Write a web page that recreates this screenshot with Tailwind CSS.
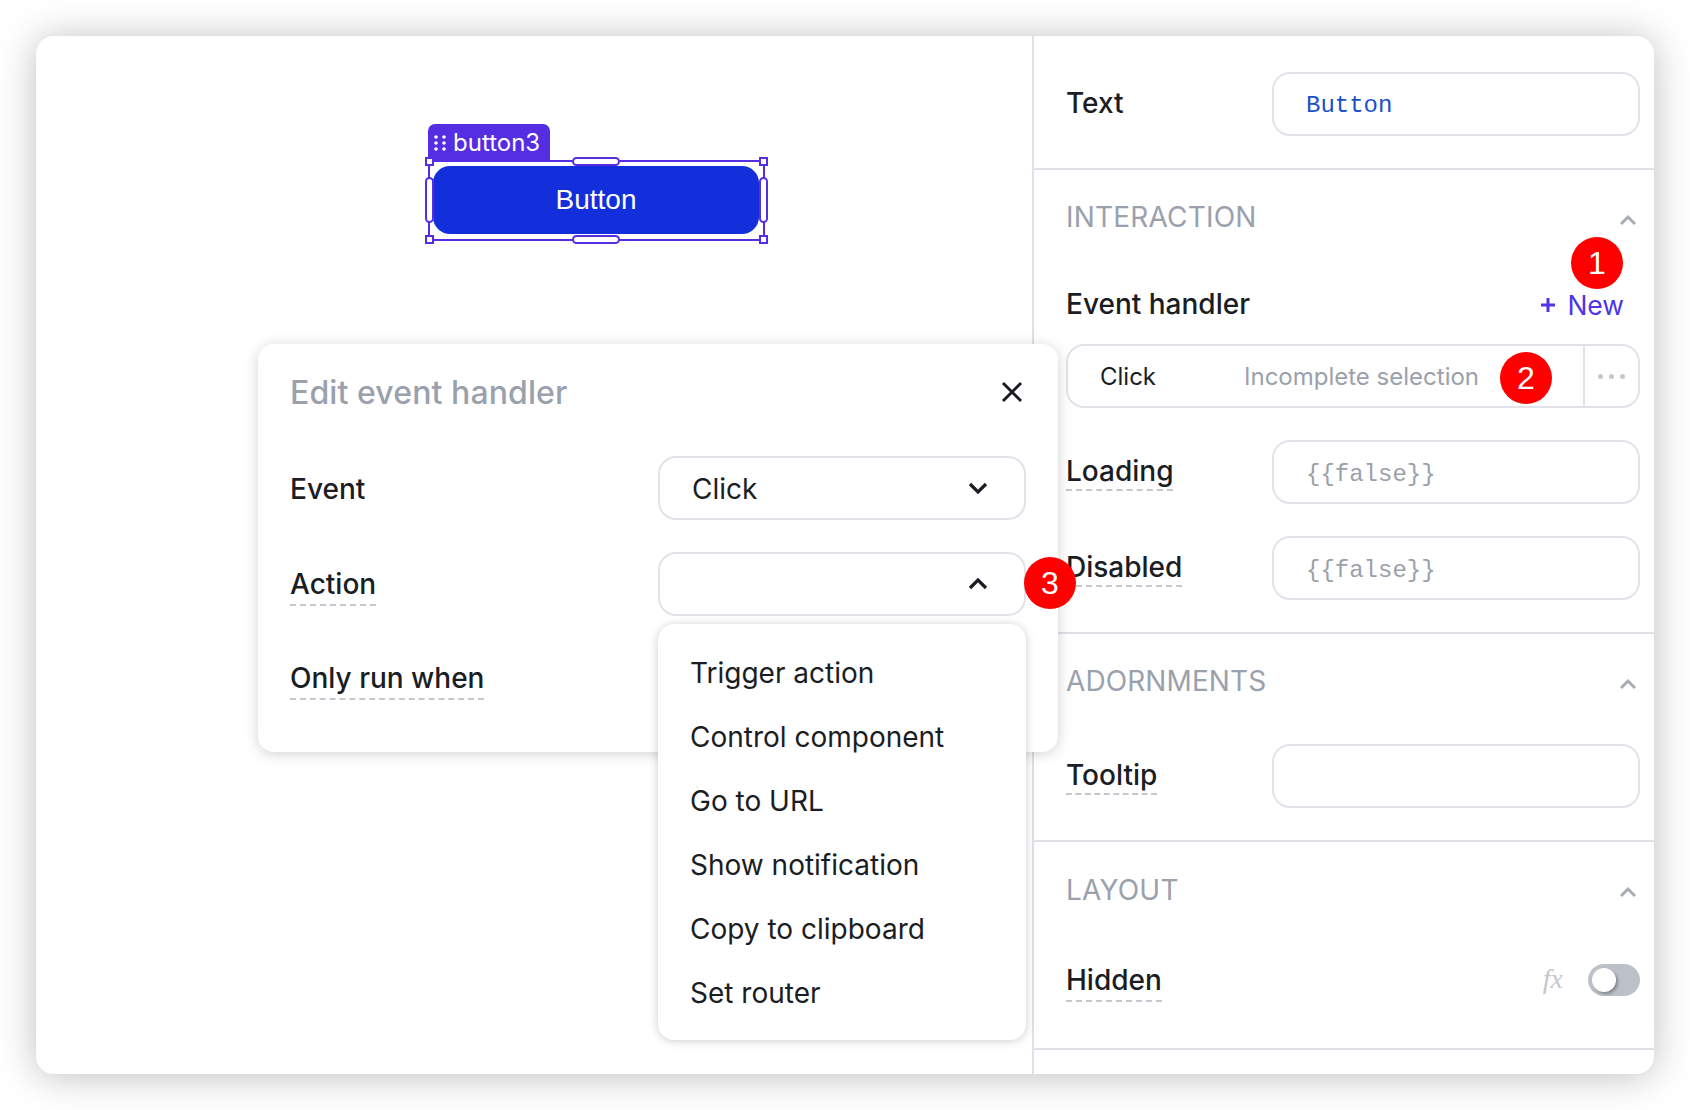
<!DOCTYPE html>
<html lang="en">
<head>
    <meta charset="UTF-8" />
    <title>Edit event handler</title>
    <script src="https://cdn.jsdelivr.net/npm/@tailwindcss/browser@4"></script>
</head>
<body class="bg-white w-[1690px] h-[1110px] overflow-hidden pt-[36px] pl-[36px] font-['Inter',sans-serif] text-[#1a1d24]">
    <div class="relative flex w-[1618px] h-[1038px] bg-white rounded-[18px] shadow-[0_2px_38px_rgba(0,0,0,0.26)]">

        <!-- canvas -->
        <div class="relative w-[996px] shrink-0">
            <!-- selected button -->
            <div class="absolute left-[392px] top-[88px] w-[122px] h-[37px] bg-[#552de3] rounded-t-[7px] flex items-center pl-[6px] gap-[7px] text-white text-[24px] leading-[32px]">
                <svg width="12" height="18" viewBox="0 0 12 18" fill="#fff"><circle cx="2" cy="3" r="1.8"/><circle cx="10" cy="3" r="1.8"/><circle cx="2" cy="9" r="1.8"/><circle cx="10" cy="9" r="1.8"/><circle cx="2" cy="15" r="1.8"/><circle cx="10" cy="15" r="1.8"/></svg>
                <span>button3</span>
            </div>
            <div class="absolute left-[392px] top-[124px] w-[337px] h-[81px] border-2 border-[#552de3]">
                <button class="absolute left-[3px] top-[4px] w-[326px] h-[68px] bg-[#132fdc] rounded-[17px] text-white text-[28px] font-['Liberation_Sans',sans-serif]">Button</button>
                <span class="absolute left-[-5px] top-[-5px] w-[9px] h-[9px] bg-white border-2 border-[#552de3]"></span>
                <span class="absolute right-[-5px] top-[-5px] w-[9px] h-[9px] bg-white border-2 border-[#552de3]"></span>
                <span class="absolute left-[-5px] bottom-[-5px] w-[9px] h-[9px] bg-white border-2 border-[#552de3]"></span>
                <span class="absolute right-[-5px] bottom-[-5px] w-[9px] h-[9px] bg-white border-2 border-[#552de3]"></span>
                <span class="absolute left-[142px] top-[-5px] w-[48px] h-[9px] bg-white border-2 border-[#552de3] rounded-full"></span>
                <span class="absolute left-[142px] bottom-[-5px] w-[48px] h-[9px] bg-white border-2 border-[#552de3] rounded-full"></span>
                <span class="absolute left-[-5px] top-[15px] w-[9px] h-[46px] bg-white border-2 border-[#552de3] rounded-full"></span>
                <span class="absolute right-[-5px] top-[15px] w-[9px] h-[46px] bg-white border-2 border-[#552de3] rounded-full"></span>
            </div>
        </div>

        <!-- right panel -->
        <div class="flex-1 border-l-2 border-[#dfe1e8] text-[28px] leading-[32px] font-medium">
            <div class="h-[134px] pt-[36px] pl-[32px] pr-[14px] border-b-2 border-[#dfe1e8]">
                <div class="flex items-center">
                    <span class="w-[206px] -mt-[3px]">Text</span>
                    <div class="w-[368px] h-[64px] border-2 border-[#e2e3ea] rounded-[18px] flex items-center pl-[32px] pt-[4px] font-['Liberation_Mono',monospace] font-normal text-[24px] text-[#1a50c8]">Button</div>
                </div>
            </div>

            <div class="h-[464px] pt-[31px] pl-[32px] pr-[14px] border-b-2 border-[#dfe1e8]">
                <div class="flex items-center justify-between text-[#9aa1ad] font-normal tracking-[0.2px]">
                    <span>INTERACTION</span>
                    <svg width="18" height="12" viewBox="0 0 18 12" fill="none" stroke="#a8adb6" stroke-width="3" class="mt-[6px] mr-[3px]"><path d="M2 10 L9 3 L16 10"/></svg>
                </div>
                <div class="flex items-center justify-between h-[32px] mt-[55px]">
                    <span>Event handler</span>
                    <span class="flex items-center gap-[11px] mr-[16px] mt-[1px] text-[26.5px] text-[#4f35e8] font-normal">
                        <svg width="16" height="16" viewBox="0 0 16 16" stroke="#4f35e8" stroke-width="3"><path d="M8 1 V15 M1 8 H15"/></svg>
                        New
                    </span>
                </div>
                <div class="flex items-center mt-[24px] h-[64px] border-2 border-[#e2e3ea] rounded-[18px] text-[24px] font-normal">
                    <span class="w-[176px] pl-[32px] pt-[2px]">Click</span>
                    <span class="w-[339px] pt-[2px] text-[#9aa1ad]">Incomplete selection</span>
                    <div class="flex-1 h-full border-l-2 border-[#e2e3ea] flex items-center justify-center gap-[6px]">
                        <span class="w-[5px] h-[5px] rounded-full bg-[#c4c8cf]"></span>
                        <span class="w-[5px] h-[5px] rounded-full bg-[#c4c8cf]"></span>
                        <span class="w-[5px] h-[5px] rounded-full bg-[#c4c8cf]"></span>
                    </div>
                </div>
                <div class="flex items-center mt-[32px]">
                    <div class="w-[206px] pt-[2px]"><span class="inline-block pb-[2px] border-b-2 border-dashed border-[#c4c7ce]">Loading</span></div>
                    <div class="w-[368px] h-[64px] border-2 border-[#e2e3ea] rounded-[18px] flex items-center pl-[32px] pt-[6px] font-['Liberation_Mono',monospace] font-normal text-[24px] text-[#9aa0aa]">{{false}}</div>
                </div>
                <div class="flex items-center mt-[32px]">
                    <div class="w-[206px] pt-[2px]"><span class="inline-block pb-[2px] border-b-2 border-dashed border-[#c4c7ce]">Disabled</span></div>
                    <div class="w-[368px] h-[64px] border-2 border-[#e2e3ea] rounded-[18px] flex items-center pl-[32px] pt-[6px] font-['Liberation_Mono',monospace] font-normal text-[24px] text-[#9aa0aa]">{{false}}</div>
                </div>
            </div>

            <div class="h-[208px] pt-[31px] pl-[32px] pr-[14px] border-b-2 border-[#dfe1e8]">
                <div class="flex items-center justify-between text-[#9aa1ad] font-normal tracking-[0.1px]">
                    <span>ADORNMENTS</span>
                    <svg width="18" height="12" viewBox="0 0 18 12" fill="none" stroke="#a8adb6" stroke-width="3" class="mt-[6px] mr-[3px]"><path d="M2 10 L9 3 L16 10"/></svg>
                </div>
                <div class="flex items-center mt-[47px]">
                    <div class="w-[206px] pt-[2px]"><span class="inline-block pb-[2px] border-b-2 border-dashed border-[#c4c7ce]">Tooltip</span></div>
                    <div class="w-[368px] h-[64px] border-2 border-[#e2e3ea] rounded-[18px]"></div>
                </div>
            </div>

            <div class="h-[208px] pt-[32px] pl-[32px] pr-[14px] border-b-2 border-[#dfe1e8]">
                <div class="flex items-center justify-between text-[#9aa1ad] font-normal tracking-[0.2px]">
                    <span>LAYOUT</span>
                    <svg width="18" height="12" viewBox="0 0 18 12" fill="none" stroke="#a8adb6" stroke-width="3" class="mt-[4px] mr-[3px]"><path d="M2 10 L9 3 L16 10"/></svg>
                </div>
                <div class="flex items-center justify-between mt-[51px]">
                    <span class="inline-block mt-[7px] pb-[4px] border-b-2 border-dashed border-[#c4c7ce]">Hidden</span>
                    <div class="flex items-center gap-[25px]">
                        <span class="italic font-normal text-[28px] text-[#c4c8ce] font-['Liberation_Serif',serif] -mt-[2px]">fx</span>
                        <div class="w-[52px] h-[32px] rounded-full bg-[#bcc1c9] p-[4px]">
                            <div class="w-[24px] h-[24px] rounded-full bg-white shadow-[2px_2px_3px_rgba(0,0,0,0.3)]"></div>
                        </div>
                    </div>
                </div>
            </div>
        </div>

        <!-- edit event handler popover -->
        <div class="absolute left-[222px] top-[308px] w-[800px] h-[408px] bg-white rounded-[16px] shadow-[0_2px_14px_rgba(0,0,0,0.18)] pt-[32px] pl-[32px] pr-[32px] text-[28px] leading-[32px] font-medium">
            <div class="flex items-center justify-between h-[34px]">
                <span class="text-[32px] font-medium tracking-[0.1px] text-[#9aa1ad]">Edit event handler</span>
                <svg width="24" height="24" viewBox="0 0 24 24" stroke="#1a1d24" stroke-width="3" class="mt-[-2px] mr-[2px]"><path d="M3 3 L21 21 M21 3 L3 21"/></svg>
            </div>
            <div class="flex items-center justify-between mt-[46px]">
                <span class="pt-[2px]">Event</span>
                <div class="w-[368px] h-[64px] border-2 border-[#e2e3ea] rounded-[18px] flex items-center justify-between pl-[32px] pr-[36px] font-normal">
                    <span class="pt-[2px]">Click</span>
                    <svg width="20" height="13" viewBox="0 0 20 13" fill="none" stroke="#1a1d24" stroke-width="3.2"><path d="M2 2 L10 10 L18 2"/></svg>
                </div>
            </div>
            <div class="flex items-center justify-between mt-[32px]">
                <span class="inline-block mt-[6px] pb-[4px] border-b-2 border-dashed border-[#c4c7ce]">Action</span>
                <div class="w-[368px] h-[64px] border-2 border-[#e2e3ea] rounded-[18px] flex items-center justify-end pr-[36px]">
                    <svg width="20" height="13" viewBox="0 0 20 13" fill="none" stroke="#1a1d24" stroke-width="3.2" class="-mt-[2px]"><path d="M2 11 L10 3 L18 11"/></svg>
                </div>
            </div>
            <div class="mt-[46px]">
                <span class="inline-block pb-[4px] border-b-2 border-dashed border-[#c4c7ce]">Only run when</span>
            </div>
        </div>

        <!-- action dropdown -->
        <ul class="absolute left-[622px] top-[588px] w-[368px] h-[416px] py-[16px] bg-white rounded-[16px] shadow-[0_1px_10px_rgba(0,0,0,0.2)] text-[28px]">
            <li class="h-[64px] pl-[32px] pt-[1px] flex items-center">Trigger action</li>
            <li class="h-[64px] pl-[32px] pt-[1px] flex items-center">Control component</li>
            <li class="h-[64px] pl-[32px] pt-[1px] flex items-center">Go to URL</li>
            <li class="h-[64px] pl-[32px] pt-[1px] flex items-center">Show notification</li>
            <li class="h-[64px] pl-[32px] pt-[1px] flex items-center">Copy to clipboard</li>
            <li class="h-[64px] pl-[32px] pt-[1px] flex items-center">Set router</li>
        </ul>

        <!-- step badges -->
        <span class="absolute left-[1535px] top-[201px] w-[52px] h-[52px] rounded-full bg-[#fe0000] text-white flex items-center justify-center text-[32px] font-['Liberation_Sans',sans-serif]">1</span>
        <span class="absolute left-[1464px] top-[316px] w-[52px] h-[52px] rounded-full bg-[#fe0000] text-white flex items-center justify-center text-[32px] font-['Liberation_Sans',sans-serif]">2</span>
        <span class="absolute left-[988px] top-[521px] w-[52px] h-[52px] rounded-full bg-[#fe0000] text-white flex items-center justify-center text-[32px] font-['Liberation_Sans',sans-serif]">3</span>
    </div>
</body>
</html>
